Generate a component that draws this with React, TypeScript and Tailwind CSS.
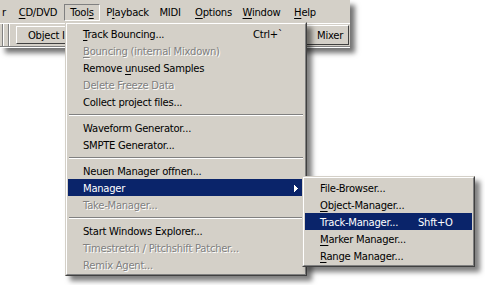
import type { ReactNode } from "react";

type Row =
  | { sep: true }
  | {
      sep?: false;
      label: ReactNode;
      keys?: string;
      disabled?: boolean;
      active?: boolean;
      arrow?: boolean;
    };

const U = ({ children }: { children: ReactNode }) => (
  <span className="underline decoration-1 underline-offset-[2px]">{children}</span>
);

const TOOLS: Row[] = [
  { label: <><U>T</U>rack Bouncing...</>, keys: "Ctrl+`" },
  { label: <><U>B</U>ouncing (internal Mixdown)</>, disabled: true },
  { label: <>Remove <U>u</U>nused Samples</> },
  { label: "Delete Freeze Data", disabled: true },
  { label: "Collect project files..." },
  { sep: true },
  { label: "Waveform Generator..." },
  { label: "SMPTE Generator..." },
  { sep: true },
  { label: "Neuen Manager offnen..." },
  { label: "Manager", active: true, arrow: true },
  { label: "Take-Manager...", disabled: true },
  { sep: true },
  { label: "Start Windows Explorer..." },
  { label: "Timestretch / Pitchshift Patcher...", disabled: true },
  { label: "Remix Agent...", disabled: true },
];

const MANAGER: Row[] = [
  { label: "File-Browser..." },
  { label: <><U>O</U>bject-Manager...</> },
  { label: "Track-Manager...", keys: "Shft+O", active: true },
  { label: <><U>M</U>arker Manager...</> },
  { label: <><U>R</U>ange Manager...</> },
];

// little pixel triangle used for submenu entries
const Arrow = () => (
  <svg width="4" height="7" viewBox="0 0 4 7" className="fill-current" shapeRendering="crispEdges">
    <rect x="0" y="0" width="1" height="7" />
    <rect x="1" y="1" width="1" height="5" />
    <rect x="2" y="2" width="1" height="3" />
    <rect x="3" y="3" width="1" height="1" />
  </svg>
);

const Menu = ({
  rows,
  labelW,
  className,
}: {
  rows: Row[];
  labelW: string;
  className: string;
}) => (
  <div
    className={`absolute border border-t-[#d4d0c8] border-l-[#d4d0c8] border-r-[#404040] border-b-[#404040] bg-[#d4d0c8] shadow-[5px_5px_5px_rgba(0,0,0,0.5)] ${className}`}
  >
    <div className="border border-t-white border-l-white border-r-[#808080] border-b-[#808080] p-px">
      {rows.map((r, i) =>
        r.sep ? (
          <div key={i} className="flex h-[9px] items-center px-px">
            <div className="h-[2px] w-full border-t border-b border-t-[#808080] border-b-white" />
          </div>
        ) : (
          <div
            key={i}
            className={`flex h-[17px] items-center whitespace-nowrap pl-[15px] pr-[6px] pt-px ${
              r.active
                ? "bg-[#0a246a] text-white"
                : r.disabled
                  ? "text-[#808080] [text-shadow:1px_1px_0_#fff]"
                  : "text-black"
            }`}
          >
            <span className={`shrink-0 ${labelW}`}>{r.label}</span>
            {r.keys && <span>{r.keys}</span>}
            {r.arrow && (
              <span className="ml-auto flex">
                <Arrow />
              </span>
            )}
          </div>
        )
      )}
    </div>
  </div>
);

const BarItem = ({ w, children }: { w: string; children: ReactNode }) => (
  <div className={`flex items-center justify-center ${w}`}>{children}</div>
);

const Groove = () => (
  <div className="h-[22px] w-[2px] border-l border-r border-l-[#808080] border-r-white" />
);

export default function App() {
  return (
    <div className="relative h-[285px] w-[485px] overflow-hidden bg-white font-['DejaVu_Sans',sans-serif] text-[10px] tracking-[-0.25px] text-black">
      {/* window strip: menubar + toolbar */}
      <div className="w-[350px] bg-[#d4d0c8] shadow-[5px_5px_5px_rgba(0,0,0,0.55)]">
        <div className="flex h-[23px] pt-[4px] pb-[2px]">
          <div className="flex w-[12px] items-center pl-[2px]">r</div>
          <BarItem w="w-[52px]">
            <span>
              <U>C</U>D/DVD
            </span>
          </BarItem>
          <div className="flex w-[36px] items-center justify-center border border-t-[#808080] border-l-[#808080] border-r-white border-b-white">
            <span>
              Tool<U>s</U>
            </span>
          </div>
          <div className="w-[4px]" />
          <BarItem w="w-[47px]">
            <span>
              P<U>l</U>ayback
            </span>
          </BarItem>
          <BarItem w="w-[38px]">MIDI</BarItem>
          <BarItem w="w-[49px]">
            <span>
              <U>O</U>ptions
            </span>
          </BarItem>
          <BarItem w="w-[47px]">
            <span>
              <U>W</U>indow
            </span>
          </BarItem>
          <BarItem w="w-[40px]">
            <span>
              <U>H</U>elp
            </span>
          </BarItem>
        </div>

        <div className="flex h-[23px] items-center border-t border-t-white">
          <div className="ml-[2px]">
            <Groove />
          </div>
          <div className="ml-[4px]">
            <Groove />
          </div>
          <div className="ml-[6px] flex h-[18px] w-[100px] items-center border border-t-white border-l-white border-r-[#404040] border-b-[#404040] pl-[11px]">
            Object I
          </div>
          <div className="mr-[1px] ml-auto flex h-[20px] w-[46px] items-center border border-t-white border-l-white border-r-[#404040] border-b-[#404040] pl-[13px]">
            Mixer
          </div>
        </div>
        <div className="h-[2px] border-t border-b border-t-[#808080] border-b-white" />
      </div>

      <Menu rows={TOOLS} labelW="w-[170px]" className="left-[65px] top-[22px] w-[242px]" />
      <Menu rows={MANAGER} labelW="w-[98px]" className="left-[302px] top-[176px] w-[173px]" />
    </div>
  );
}
